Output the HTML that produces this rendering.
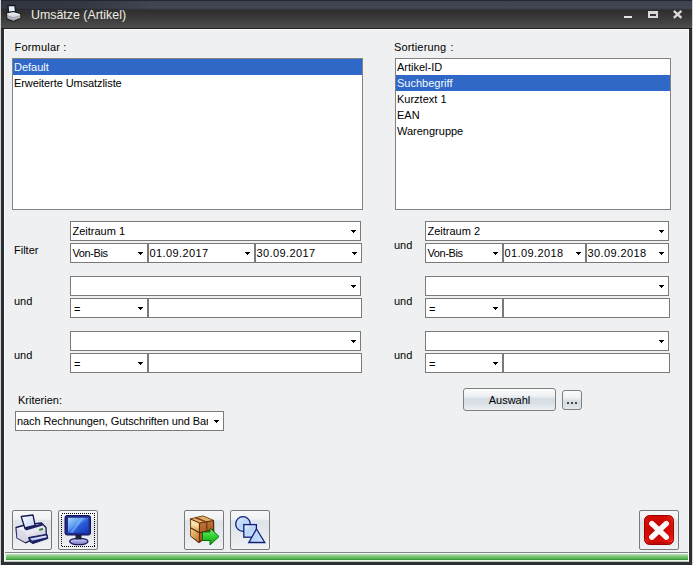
<!DOCTYPE html>
<html><head><meta charset="utf-8">
<style>
*{margin:0;padding:0;box-sizing:border-box}
html,body{width:693px;height:565px;overflow:hidden;background:#2c2f33}
body{position:relative;font-family:"Liberation Sans",sans-serif;font-size:11px;color:#000}
.a{position:absolute}
#edgeL{left:0;top:0;width:1px;height:565px;background:#d4d4d8}
#edgeR{left:692px;top:0;width:1px;height:565px;background:#d4d4d8}
#title{left:1px;top:0;width:691px;height:29px;
 background:linear-gradient(to bottom,#23262e 0px,#23262e 1px,#3f4450 1px,#434652 8px,#3a3c45 9px,#2d2e32 10px,#333230 13px,#3e3e3e 20px,#4c4c4c 27px,#4c4c4c 28px,#1f1f1f 28px,#1f1f1f 29px)}
#ttxt{left:31px;top:7px;font-size:12.4px;color:#ecece4;line-height:16px;white-space:nowrap}
#client{left:4px;top:29px;width:685px;height:533px;background:#eff0f1;border:1px solid #fbfbfc;border-bottom-color:#c5c7c8}
.t{position:absolute;line-height:13px;white-space:nowrap}
.lb{position:absolute;background:#fff;border:1px solid #828282}
.row{position:absolute;left:0;height:16px;line-height:16px;padding-left:1px;white-space:nowrap}
.sel{background:#3068c8;color:#f4faff}
.cb{position:absolute;background:#fff;border:1px solid #7a7a7a;height:20px}
.cb .tx{position:absolute;left:1.5px;top:2px;line-height:14px;white-space:nowrap}
.arr{position:absolute;width:5px;height:1px;background:#000}.arr:before{content:"";position:absolute;left:1px;top:1px;width:3px;height:1px;background:#000}.arr:after{content:"";position:absolute;left:2px;top:2px;width:1px;height:1px;background:#000}
.btn{position:absolute;border:1px solid #7f7f7f;border-radius:3px;
 background:linear-gradient(to bottom,#fdfdfd 0px,#f6f7f8 3px,#f0f2f4 6px,#e8ecf0 8px,#dde3e9 9px,#d5dce3 10px,#d9dfe5 14px,#e4e8ec 18px,#eef0f3 21px)}
.bb{position:absolute;width:40px;height:40px;border:1px solid #7a7a7a;border-radius:2px;
 background:linear-gradient(to bottom,#f7f8f9 0px,#f1f2f4 8px,#e2e6eb 9.5px,#dfe4e9 12px,#e4e8ec 22px,#edeff2 34px,#f1f2f4 38px)}
</style></head><body>
<div class="a" id="edgeL"></div><div class="a" id="edgeR"></div>
<div class="a" id="title"></div>
<div class="a" style="left:1px;top:1px;width:160px;height:9px;background:linear-gradient(to right,rgba(18,20,26,0.3) 0px,rgba(18,20,26,0.28) 80px,rgba(18,20,26,0) 150px)"></div>
<div class="a" id="ttxt">Umsätze (Artikel)</div>
<svg class="a" style="left:4px;top:3px" width="20" height="21" viewBox="0 0 20 21">
<defs><linearGradient id="ti" x1="0" y1="0" x2="0" y2="1"><stop offset="0" stop-color="#f4f6fa"/><stop offset="1" stop-color="#b0b4bc"/></linearGradient></defs>
<path d="M4,2.5 L11,2.5 L11.5,9 L4.5,9.5 Z" fill="#e4ecff" stroke="#16181e" stroke-width="1.3"/>
<path d="M2.5,10 L9,8.5 L16.5,10.5 L17,15 L9.5,18.5 L3,16 Z" fill="url(#ti)" stroke="#16181e" stroke-width="1.1"/>
<path d="M3,12.5 L9.5,15 L16.8,12.5 M3,14.5 L9.5,17 L16.8,14.5" fill="none" stroke="#80848c" stroke-width="0.7"/>
</svg>
<div class="a" style="left:624px;top:16px;width:8px;height:2px;background:#e4e4e4"></div>
<div class="a" style="left:648px;top:11px;width:10px;height:7px;border:2px solid #d8d8d8;border-top-width:3px"></div>
<svg class="a" style="left:672px;top:9px" width="12" height="11" viewBox="0 0 12 11">
<path d="M1.8,1.8 L9.4,8.8 M9.4,1.8 L1.8,8.8" stroke="#dadada" stroke-width="2.3"/>
</svg>
<div class="a" id="client"></div>

<!-- labels -->
<div class="t" style="left:14.5px;top:41px;word-spacing:0px;letter-spacing:0.2px">Formular :</div>
<div class="t" style="left:394px;top:41px;word-spacing:1px;letter-spacing:0.15px">Sortierung :</div>

<!-- listboxes -->
<div class="lb" style="left:12px;top:58px;width:351px;height:152px">
 <div class="row sel" style="top:0;width:349px">Default</div>
 <div class="row" style="top:16px;letter-spacing:-0.08px">Erweiterte Umsatzliste</div>
</div>
<div class="lb" style="left:395px;top:58px;width:276px;height:152px">
 <div class="row" style="top:0">Artikel-ID</div>
 <div class="row sel" style="top:16px;width:274px">Suchbegriff</div>
 <div class="row" style="top:32px">Kurztext 1</div>
 <div class="row" style="top:48px">EAN</div>
 <div class="row" style="top:64px">Warengruppe</div>
</div>

<div class="cb" style="left:70px;top:221px;width:291px"><div class="tx">Zeitraum 1</div><div class="arr" style="left:280px;top:8px"></div></div>
<div class="cb" style="left:70px;top:243px;width:78px"><div class="tx" style="letter-spacing:-0.4px">Von-Bis</div><div class="arr" style="left:67px;top:8px"></div></div>
<div class="cb" style="left:148px;top:243px;width:107px"><div class="tx" style="left:0.5px;letter-spacing:0.4px">01.09.2017</div><div class="arr" style="left:96px;top:8px"></div></div>
<div class="cb" style="left:255px;top:243px;width:107px"><div class="tx" style="left:0.5px;letter-spacing:0.4px">30.09.2017</div><div class="arr" style="left:96px;top:8px"></div></div>
<div class="cb" style="left:70px;top:276px;width:291px"><div class="arr" style="left:280px;top:8px"></div></div>
<div class="cb" style="left:70px;top:298px;width:78px"><div class="tx" style="top:3px;left:3px">=</div><div class="arr" style="left:67px;top:8px"></div></div>
<div class="cb" style="left:148px;top:298px;width:214px"></div>
<div class="cb" style="left:70px;top:331px;width:291px"><div class="arr" style="left:280px;top:8px"></div></div>
<div class="cb" style="left:70px;top:353px;width:78px"><div class="tx" style="top:3px;left:3px">=</div><div class="arr" style="left:67px;top:8px"></div></div>
<div class="cb" style="left:148px;top:353px;width:214px"></div>
<div class="cb" style="left:425px;top:221px;width:244px"><div class="tx">Zeitraum 2</div><div class="arr" style="left:233px;top:8px"></div></div>
<div class="cb" style="left:425px;top:243px;width:78px"><div class="tx" style="letter-spacing:-0.4px">Von-Bis</div><div class="arr" style="left:67px;top:8px"></div></div>
<div class="cb" style="left:503px;top:243px;width:83px"><div class="tx" style="left:0.5px;letter-spacing:0.4px">01.09.2018</div><div class="arr" style="left:72px;top:8px"></div></div>
<div class="cb" style="left:586px;top:243px;width:83px"><div class="tx" style="left:0.5px;letter-spacing:0.4px">30.09.2018</div><div class="arr" style="left:72px;top:8px"></div></div>
<div class="cb" style="left:425px;top:276px;width:244px"><div class="arr" style="left:233px;top:8px"></div></div>
<div class="cb" style="left:425px;top:298px;width:78px"><div class="tx" style="top:3px;left:3px">=</div><div class="arr" style="left:67px;top:8px"></div></div>
<div class="cb" style="left:503px;top:298px;width:167px"></div>
<div class="cb" style="left:425px;top:331px;width:244px"><div class="arr" style="left:233px;top:8px"></div></div>
<div class="cb" style="left:425px;top:353px;width:78px"><div class="tx" style="top:3px;left:3px">=</div><div class="arr" style="left:67px;top:8px"></div></div>
<div class="cb" style="left:503px;top:353px;width:167px"></div>
<div class="t" style="left:14px;top:244px">Filter</div>
<div class="t" style="left:14px;top:295px">und</div>
<div class="t" style="left:14px;top:349px">und</div>
<div class="t" style="left:394px;top:239px">und</div>
<div class="t" style="left:394px;top:295px">und</div>
<div class="t" style="left:394px;top:349px">und</div>
<div class="t" style="left:18px;top:394px">Kriterien:</div>
<div class="cb" style="left:15px;top:411px;width:209px"><div class="tx" style="left:1px;width:191px;overflow:hidden;letter-spacing:-0.1px">nach Rechnungen, Gutschriften und Bar</div><div class="arr" style="left:198px;top:8px"></div></div>
<div class="btn" style="left:463px;top:388px;width:93px;height:23px"><div class="t" style="left:0;width:91px;text-align:center;top:5px">Auswahl</div></div>
<div class="btn" style="left:562px;top:390px;width:20px;height:20px"><div class="a" style="left:4px;top:11px;width:2px;height:2px;background:#484848"></div><div class="a" style="left:8px;top:11px;width:2px;height:2px;background:#484848"></div><div class="a" style="left:12px;top:11px;width:2px;height:2px;background:#484848"></div></div>
<div class="bb" style="left:12px;top:510px"><svg width="40" height="40" viewBox="0 0 40 40" style="position:absolute;left:-1px;top:-1px">
<defs><linearGradient id="pb" x1="0" y1="0" x2="0.6" y2="1"><stop offset="0" stop-color="#fbfbff"/><stop offset="0.6" stop-color="#e6e6f0"/><stop offset="1" stop-color="#b8b8cc"/></linearGradient>
<linearGradient id="pp" x1="0" y1="0" x2="1" y2="1"><stop offset="0" stop-color="#ffffff"/><stop offset="1" stop-color="#c0d0f4"/></linearGradient>
<linearGradient id="pt" x1="0" y1="0" x2="0" y2="1"><stop offset="0" stop-color="#f0f4ff"/><stop offset="1" stop-color="#a8b8f0"/></linearGradient></defs>
<path d="M4,17.5 L13,15 L29.5,13 L34,17.5 L34.3,25 L22,29 L13.5,32.8 L5,28 Z" fill="url(#pb)" stroke="#161a50" stroke-width="1.3" stroke-linejoin="round"/>
<path d="M4.5,18 L13.5,22 L13.5,32.5 L5,28 Z" fill="#d4d4e2" opacity="0.7"/>
<path d="M12,18.5 L29.5,13.5 L31,15.5 L14,20.5 Z" fill="#1e2468"/>
<path d="M9.2,6.5 L21,5 L23.2,15.5 L12.8,18 Z" fill="url(#pp)" stroke="#161a50" stroke-width="1.3" stroke-linejoin="round"/>
<path d="M27,19 L31,17.8 L31,20 L27.5,21 Z" fill="#2f8a2f"/>
<path d="M16.5,27.5 L35,24.3 L35.8,28.5 L21,33.5 L18.2,32 Z" fill="#1c2270" stroke="#161a50" stroke-width="1" stroke-linejoin="round"/>
<path d="M18,28.5 L34,25.5 L34.8,27.2 L20,30.8 Z" fill="url(#pt)"/>
</svg></div>
<div class="bb" style="left:58px;top:510px"><svg width="40" height="40" viewBox="0 0 40 40" style="position:absolute;left:-1px;top:-1px">
<defs><linearGradient id="ms" x1="0" y1="0" x2="1" y2="1"><stop offset="0" stop-color="#a8d8ff"/><stop offset="0.4" stop-color="#5a9af0"/><stop offset="0.55" stop-color="#2c5cd8"/><stop offset="1" stop-color="#1838b8"/></linearGradient>
<linearGradient id="mb" x1="0" y1="0" x2="0" y2="1"><stop offset="0" stop-color="#d8d8ff"/><stop offset="1" stop-color="#7070c0"/></linearGradient></defs>
<rect x="3.5" y="3.5" width="33" height="33" fill="none" stroke="#000" stroke-width="1" stroke-dasharray="1 1" shape-rendering="crispEdges"/>
<ellipse cx="20.8" cy="31.5" rx="9.2" ry="3.2" fill="url(#mb)" stroke="#1a1a60" stroke-width="1.3"/>
<rect x="17.5" y="23.5" width="6" height="6" fill="#202040"/>
<rect x="7" y="5.5" width="25.5" height="19.5" rx="2" fill="#232a8a" stroke="#10145a" stroke-width="1"/>
<rect x="10" y="7.8" width="20.5" height="15" fill="url(#ms)"/>
<path d="M12,22.8 L23,7.8 L26,7.8 L15,22.8 Z" fill="#80c0ff" opacity="0.55"/>
</svg></div>
<div class="bb" style="left:184px;top:510px"><svg width="40" height="40" viewBox="0 0 40 40" style="position:absolute;left:-1px;top:-1px">
<defs><linearGradient id="bl" x1="0" y1="0" x2="0.4" y2="1"><stop offset="0" stop-color="#f8e4ac"/><stop offset="0.5" stop-color="#e8c078"/><stop offset="1" stop-color="#c88838"/></linearGradient>
<linearGradient id="br" x1="0" y1="0" x2="0.3" y2="1"><stop offset="0" stop-color="#d08848"/><stop offset="1" stop-color="#a05020"/></linearGradient>
<linearGradient id="ga" x1="0" y1="0" x2="0" y2="1"><stop offset="0" stop-color="#80f080"/><stop offset="0.5" stop-color="#30d030"/><stop offset="1" stop-color="#10a010"/></linearGradient></defs>
<path d="M6.5,9 L18.7,6 L29.5,10.5 L29.8,22 L15,32.5 L6.8,26 Z" fill="url(#br)" stroke="#5a2808" stroke-width="1.2" stroke-linejoin="round"/>
<path d="M6.8,9.2 L15.6,13 L15.3,32 L6.8,26 Z" fill="url(#bl)"/>
<path d="M6.8,9.2 L18.7,6.3 L29.3,10.6 L15.6,13 Z" fill="#e4b068"/>
<path d="M8,10 L14,12.5 L14.5,18 L8,15 Z" fill="#fff0c0" opacity="0.6"/>
<path d="M6.5,9 L15.6,13 L29.5,10.5 M15.6,13 L15.3,32.3" fill="none" stroke="#5a2808" stroke-width="1"/>
<path d="M6.5,17.7 L15.6,22.8 L29.5,19.4" fill="none" stroke="#5a2808" stroke-width="1.1"/>
<path d="M11.4,7.5 L22.7,12.2 L22.7,21.7" fill="none" stroke="#7a3a10" stroke-width="1.4"/>
<path d="M18.5,22 L26,22 L26,18 L35,26.5 L26,35 L26,30.5 L18.5,30.5 Z" fill="url(#ga)" stroke="#087008" stroke-width="1" stroke-linejoin="round"/>
</svg></div>
<div class="bb" style="left:230px;top:510px"><svg width="40" height="40" viewBox="0 0 40 40" style="position:absolute;left:-1px;top:-1px">
<defs><linearGradient id="sf" x1="0" y1="0" x2="1" y2="1"><stop offset="0" stop-color="#e4efff"/><stop offset="0.5" stop-color="#b8d4f8"/><stop offset="1" stop-color="#d8e8ff"/></linearGradient></defs>
<circle cx="13" cy="14" r="7.3" fill="url(#sf)" stroke="#10207a" stroke-width="1.3"/>
<rect x="13.8" y="14.6" width="12.6" height="12.6" fill="url(#sf)" stroke="#10207a" stroke-width="1.3"/>
<path d="M26.5,19 L34.8,32.5 L18.8,32.5 Z" fill="url(#sf)" stroke="#10207a" stroke-width="1.3" stroke-linejoin="miter"/>
</svg></div>
<div class="bb" style="left:639px;top:510px"><svg width="40" height="40" viewBox="0 0 40 40" style="position:absolute;left:-1px;top:-1px">
<defs><radialGradient id="rx" cx="0.45" cy="0.45" r="0.65"><stop offset="0" stop-color="#b80404"/><stop offset="0.75" stop-color="#d80c08"/><stop offset="1" stop-color="#f02818"/></radialGradient></defs>
<rect x="5.5" y="5.5" width="29" height="29" rx="5" fill="url(#rx)" stroke="#9a0000" stroke-width="1"/>
<path d="M8,33 L32,33" stroke="#8a0000" stroke-width="1.5" opacity="0.5"/>
<path d="M12.8,13.5 L27.3,27.2 M27.3,13.5 L12.8,27.2" stroke="#fffafa" stroke-width="5.4" stroke-linecap="round"/>
</svg></div>
<div class="a" style="left:5px;top:552px;width:683px;height:1px;background:#858585"></div>
<div class="a" style="left:5px;top:553px;width:683px;height:8px;background:linear-gradient(to bottom,#eefcee 0px,#eefcee 1px,#c7dfc7 1px,#a6d3a3 2px,#8cca87 3px,#6fc36a 4px,#5ebd5a 5px,#4fa84c 6px,#3e9a3e 6px,#3e9a3e 7px,#e3fbe3 7px)"></div>
<div class="a" style="left:5px;top:553px;width:1px;height:8px;background:#e2f6e2"></div>
</body></html>
